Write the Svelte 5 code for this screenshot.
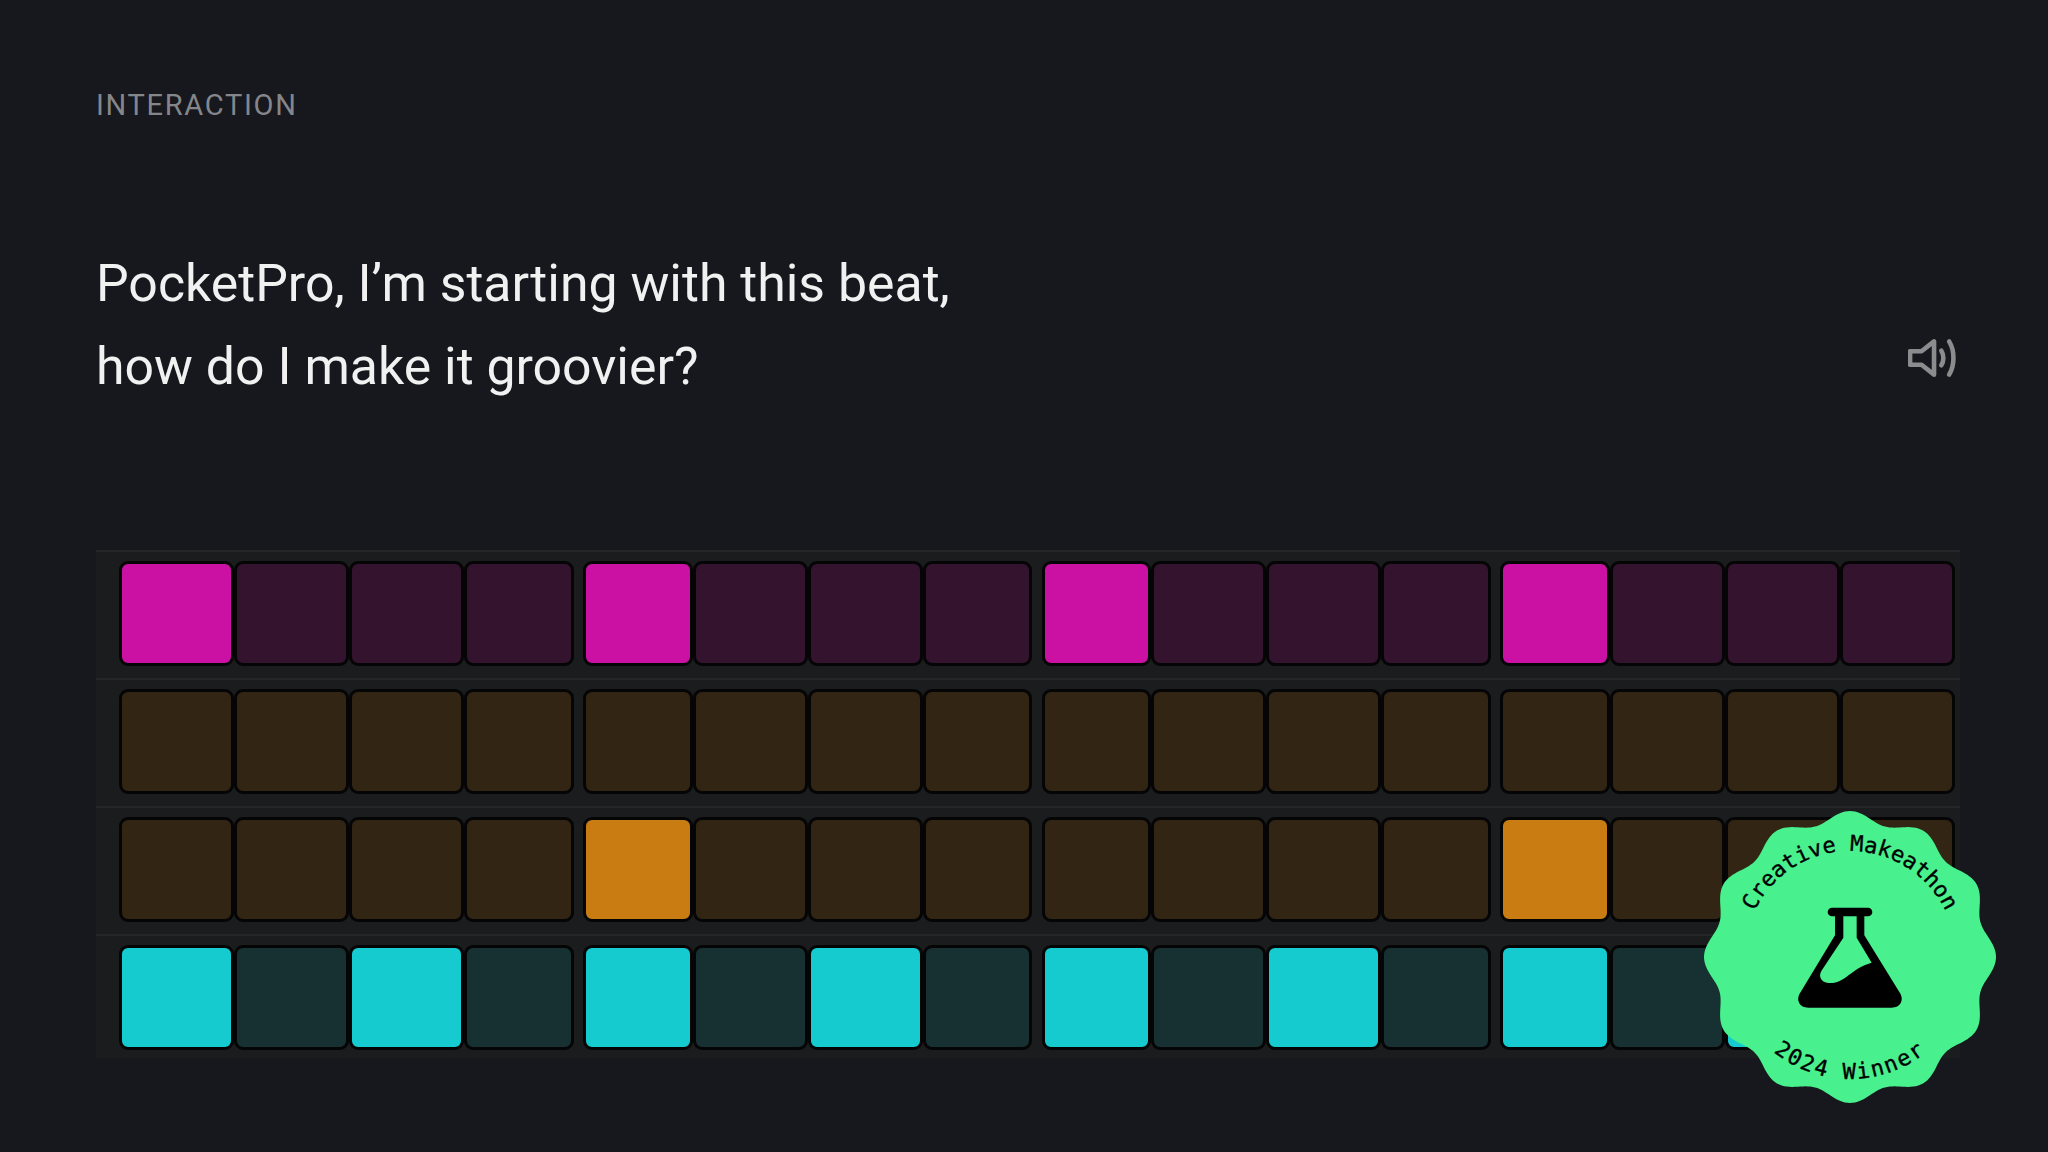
<script lang="ts">
  const tracks = [
    { name: 'pink', on: [0, 4, 8, 12] },
    { name: 'amber', on: [] },
    { name: 'amber', on: [4, 12] },
    { name: 'cyan', on: [0, 2, 4, 6, 8, 10, 12, 14] },
  ];
  const bars = [0, 4, 8, 12];

  // first and last step of a bar are a bit narrower, except at the outer edges
  function narrow(i: number) {
    return (i % 4 === 0 && i !== 0) || (i % 4 === 3 && i !== 15);
  }

  // scalloped badge outline, 12 lobes
  const lobes = 12;
  const pts: string[] = [];
  for (let i = 0; i < 360; i++) {
    const a = (i / 360) * Math.PI * 2;
    const r = 140.5 + 5.5 * Math.cos(lobes * a);
    pts.push(`${(r * Math.sin(a)).toFixed(2)},${(-r * Math.cos(a)).toFixed(2)}`);
  }
  const scallop = 'M' + pts.join('L') + 'Z';
</script>

<main class="page">
  <div class="eyebrow">INTERACTION</div>

  <div class="prompt">
    <h1>PocketPro, I’m starting with this beat,<br />how do I make it groovier?</h1>
    <svg class="speaker" viewBox="0 0 48 38" fill="none" stroke="#8c8c8e" stroke-width="4.4" stroke-linejoin="round" stroke-linecap="round" aria-label="Play audio">
      <path d="M2 12.500h11L25 3v32L13 25.500H2z" />
      <path d="M32 12c2.600 4 2.600 10 0 14" />
      <path d="M39.500 3c5.500 9 5.500 23 0 32" />
    </svg>
  </div>

  <div class="sequencer">
    {#each tracks as track}
      <div class="track {track.name}">
        {#each bars as start}
          <div class="bar">
            {#each [0, 1, 2, 3] as k}
              <div class="step" class:on={track.on.includes(start + k)} class:narrow={narrow(start + k)}></div>
            {/each}
          </div>
        {/each}
      </div>
    {/each}
  </div>

  <svg class="badge" viewBox="-150 -150 300 300" aria-label="Creative Makeathon 2024 Winner">
    <defs>
      <path id="arc-top" d="M-106 0A106 106 0 0 1 106 0" />
      <path id="arc-bottom" d="M-122 0A122 122 0 0 0 122 0" />
    </defs>
    <path d={scallop} fill="#48f18d" />
    <text class="badge-text"><textPath href="#arc-top" startOffset="50%" text-anchor="middle">Creative Makeathon</textPath></text>
    <text class="badge-text wide"><textPath href="#arc-bottom" startOffset="50%" text-anchor="middle">2024 Winner</textPath></text>
    <g transform="scale(0.3333) translate(-510 -470)">
      <path fill-rule="evenodd" fill="#000" d="M456 322H564a13 13 0 0 1 0 26H553V405L658 575C675 600 660 622 635 622H385C360 622 345 600 362 575L465 405V348H456a13 13 0 0 1 0-26ZM490 348V412L424 512C414 530 425 546 445 548C495 552 510 505 575 487L530 412V348Z" />
    </g>
  </svg>
</main>

<style>
  :global(body) {
    margin: 0;
    background: #16181d;
  }

  .page {
    position: relative;
    box-sizing: border-box;
    width: 2048px;
    height: 1152px;
    padding: 87px 88px 0 96px;
    background: #16181d;
    overflow: hidden;
    font-family: Roboto, "Noto Sans", sans-serif;
  }

  .eyebrow {
    font-size: 29px;
    line-height: 36px;
    color: #85868a;
    letter-spacing: 1.7px;
  }

  .prompt {
    display: flex;
    justify-content: space-between;
    align-items: flex-end;
    margin-top: 119px;
  }

  h1 {
    margin: 0;
    font-size: 51.8px;
    font-weight: 400;
    line-height: 83px;
    color: #f1f1f2;
  }

  .speaker {
    width: 50px;
    height: 40px;
    margin-bottom: 30px;
    margin-right: 2px;
  }

  .sequencer {
    margin-top: 142px;
  }

  .track {
    display: flex;
    gap: 9.5px;
    height: 128px;
    box-sizing: border-box;
    padding: 9px 0 0 23px;
    background: #1b1c1e;
    border-top: 2px solid #242628;
  }

  .track:last-child {
    height: 124px;
  }

  .bar {
    display: flex;
  }

  .step {
    box-sizing: border-box;
    width: 115px;
    height: 105px;
    border: 3px solid #050506;
    border-radius: 9px;
  }

  .step.narrow {
    width: 109.5px;
  }

  .pink .step { background: #33132e; }
  .pink .step.on { background: #cb10a4; }
  .amber .step { background: #322513; }
  .amber .step.on { background: #c87c12; }
  .cyan .step { background: #173032; }
  .cyan .step.on { background: #15cbcf; }

  .badge {
    position: absolute;
    left: 1700px;
    top: 807px;
    width: 300px;
    height: 300px;
  }

  .badge-text {
    font-family: "DejaVu Sans Mono", monospace;
    font-size: 22px;
    fill: #000;
    stroke: #000;
    stroke-width: 0.35px;
  }

  .badge-text.wide {
    letter-spacing: 1.8px;
  }
</style>
